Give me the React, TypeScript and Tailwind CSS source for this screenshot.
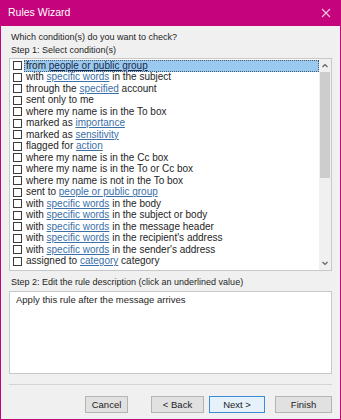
import { ReactNode } from "react";

type Row = { parts: (string | { link: string })[] };

const rows: Row[] = [
  { parts: ["from ", { link: "people or public group" }] },
  { parts: ["with ", { link: "specific words" }, " in the subject"] },
  { parts: ["through the ", { link: "specified" }, " account"] },
  { parts: ["sent only to me"] },
  { parts: ["where my name is in the To box"] },
  { parts: ["marked as ", { link: "importance" }] },
  { parts: ["marked as ", { link: "sensitivity" }] },
  { parts: ["flagged for ", { link: "action" }] },
  { parts: ["where my name is in the Cc box"] },
  { parts: ["where my name is in the To or Cc box"] },
  { parts: ["where my name is not in the To box"] },
  { parts: ["sent to ", { link: "people or public group" }] },
  { parts: ["with ", { link: "specific words" }, " in the body"] },
  { parts: ["with ", { link: "specific words" }, " in the subject or body"] },
  { parts: ["with ", { link: "specific words" }, " in the message header"] },
  { parts: ["with ", { link: "specific words" }, " in the recipient's address"] },
  { parts: ["with ", { link: "specific words" }, " in the sender's address"] },
  { parts: ["assigned to ", { link: "category" }, " category"] },
];

function Button({ children, focused, className }: { children: ReactNode; focused?: boolean; className: string }) {
  return (
    <button
      type="button"
      className={
        (focused
          ? "h-[17px] border border-[#3c8ad8] bg-[#e5f1fb] text-[9.5px] leading-none text-[#222] "
          : "h-[17px] border border-[#b4b4b4] bg-[#e1e1e1] text-[9.5px] leading-none text-[#222] ") + className
      }
    >
      {children}
    </button>
  );
}

export default function App() {
  return (
    <div className="flex h-[420px] w-[341px] flex-col border-x border-b border-[#c4037c] bg-[#f0f0f0] font-['Liberation_Sans',Arial,sans-serif] text-[#1e1e1e]">
      <div className="-mx-px flex h-[26px] shrink-0 items-center justify-between bg-[#c4037c] pl-[8px] pr-[10px] text-white">
        <span className="text-[10.5px]">Rules Wizard</span>
        <svg width="10" height="10" viewBox="0 0 10 10" stroke="#f6c6e2" strokeWidth="1.1">
          <path d="M1 1 L9 9 M9 1 L1 9" />
        </svg>
      </div>

      <div className="flex flex-1 flex-col px-[8px]">
        <p className="mt-[5px] pl-[2px] text-[9px] leading-[13px]">Which condition(s) do you want to check?</p>
        <p className="pl-[2px] text-[9px] leading-[13px]">Step 1: Select condition(s)</p>

        <div className="mt-[1px] flex h-[213px] border border-[#c8c8c8] bg-white">
          <div className="flex flex-1 flex-col pt-[1px]">
            {rows.map((row, i) => (
              <div key={i} className="flex h-[11.5px] items-center">
                <span className="ml-[3px] h-[9px] w-[9px] shrink-0 border border-[#3a3a3a] bg-white" />
                <span
                  className={
                    i === 0
                      ? "ml-[2px] flex h-[11.5px] flex-1 items-center border border-dotted border-[#4a5a6a] bg-[#99c9ef] pl-[1px] text-[10px] leading-none whitespace-nowrap"
                      : "ml-[2px] flex h-[11.5px] flex-1 items-center border border-transparent pl-[1px] text-[10px] leading-none whitespace-nowrap"
                  }
                >
                  {row.parts.map((p, j) =>
                    typeof p === "string" ? (
                      <span key={j} className="whitespace-pre">{p}</span>
                    ) : (
                      <span
                        key={j}
                        className={i === 0 ? "text-[#1c2a4a] underline" : "text-[#3a6fa8] underline"}
                      >
                        {p.link}
                      </span>
                    )
                  )}
                </span>
              </div>
            ))}
          </div>
          <div className="flex w-[12px] flex-col items-center bg-[#f0f0f0]">
            <svg width="12" height="13" viewBox="0 0 12 13">
              <path d="M3.5 8 L6 5.5 L8.5 8" fill="none" stroke="#606060" strokeWidth="1.2" />
            </svg>
            <div className="h-[106px] w-[10px] bg-[#cdcdcd]" />
            <div className="flex-1" />
            <svg width="12" height="13" viewBox="0 0 12 13">
              <path d="M3.5 5 L6 7.5 L8.5 5" fill="none" stroke="#606060" strokeWidth="1.2" />
            </svg>
          </div>
        </div>

        <p className="mt-[5px] pl-[2px] text-[9px] leading-[13px]">
          Step 2: Edit the rule description (click an underlined value)
        </p>
        <div className="mt-[2px] h-[83px] border border-[#c8c8c8] bg-white px-[6px] pt-[1px] text-[9.5px] leading-[13px]">
          Apply this rule after the message arrives
        </div>

        <div className="mt-[10px] h-px bg-[#d4d4d4]" />

        <div className="mt-[11px] flex items-center">
          <Button className="ml-[76px] w-[43px]">Cancel</Button>
          <Button className="ml-[23px] w-[53px]">&lt; Back</Button>
          <Button focused className="ml-[5px] w-[56px]">Next &gt;</Button>
          <Button className="ml-[10px] w-[57px]">Finish</Button>
        </div>
      </div>
    </div>
  );
}
